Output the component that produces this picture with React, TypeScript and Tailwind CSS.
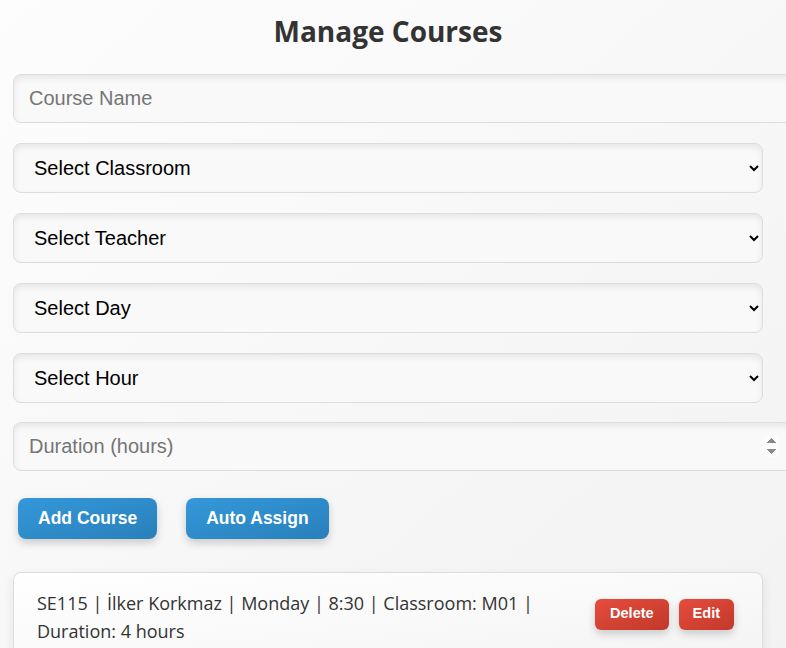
export default function App() {
  const selects = ["Select Classroom", "Select Teacher", "Select Day", "Select Hour"]
  return (
    <div className="min-h-screen overflow-hidden bg-gradient-to-br from-[#fdfdfd] to-[#f2f2f2] font-['Liberation_Sans',Arial,sans-serif]">
      <div className="ml-[13px] w-[750px]">
        <h1 className="mt-[12px] mb-[24px] text-center font-['Open_Sans',sans-serif] text-[28px] font-bold leading-[38px] text-[#333]">
          Manage Courses
        </h1>
        <input
          type="text"
          placeholder="Course Name"
          className="mb-[20px] box-content block h-[47px] w-full rounded-lg border border-[#ddd] bg-[#f9f9f9] px-[15px] py-0 text-[20px] text-black shadow-[inset_0_3px_6px_rgba(0,0,0,0.08)] placeholder:text-[#757575]"
        />
        {selects.map((s) => (
          <select
            key={s}
            className="mb-[20px] block h-[50px] w-full rounded-lg border border-[#ddd] bg-[#f9f9f9] pl-[16px] pr-[8px] text-[20px] text-black shadow-[inset_0_3px_6px_rgba(0,0,0,0.08)]"
            defaultValue=""
          >
            <option value="">{s}</option>
          </select>
        ))}
        <input
          type="number"
          placeholder="Duration (hours)"
          className="mt-[-1px] box-content block h-[47px] w-full rounded-lg border border-[#ddd] bg-[#f9f9f9] px-[15px] py-0 text-[20px] text-black shadow-[inset_0_3px_6px_rgba(0,0,0,0.08)] placeholder:text-[#757575] [&::-webkit-inner-spin-button]:opacity-100"
        />
        <div className="mt-[27px] flex">
          <button className="ml-[5px] h-[41px] rounded-lg bg-gradient-to-br from-[#3498db] to-[#2980b9] px-[20px] text-[17.5px] font-bold text-white shadow-[0_4px_8px_rgba(0,0,0,0.18)]">
            Add Course
          </button>
          <button className="ml-[29px] h-[41px] rounded-lg bg-gradient-to-br from-[#3498db] to-[#2980b9] px-[20px] text-[17.5px] font-bold text-white shadow-[0_4px_8px_rgba(0,0,0,0.18)]">
            Auto Assign
          </button>
        </div>
        <div className="mt-[33px] flex items-center justify-between rounded-lg border border-[#ddd] bg-gradient-to-br from-[#ffffff] to-[#f4f4f4] pb-[16px] pl-[23px] pr-[28px] pt-[16px] shadow-[0_4px_12px_rgba(0,0,0,0.08)]">
          <p className="w-[540px] font-['Open_Sans',sans-serif] text-[18px] leading-[28px] text-[#333]">
            SE115 | İlker Korkmaz | Monday | 8:30 | Classroom: M01 | Duration: 4 hours
          </p>
          <div className="-mt-[6px] flex gap-[10px]">
            <button className="h-[31px] rounded-md bg-gradient-to-br from-[#e74c3c] to-[#c0392b] px-[15px] text-[14.5px] font-bold text-white shadow-[0_4px_8px_rgba(0,0,0,0.18)]">
              Delete
            </button>
            <button className="h-[31px] rounded-md bg-gradient-to-br from-[#e74c3c] to-[#c0392b] px-[14px] text-[14.5px] font-bold text-white shadow-[0_4px_8px_rgba(0,0,0,0.18)]">
              Edit
            </button>
          </div>
        </div>
      </div>
    </div>
  )
}
